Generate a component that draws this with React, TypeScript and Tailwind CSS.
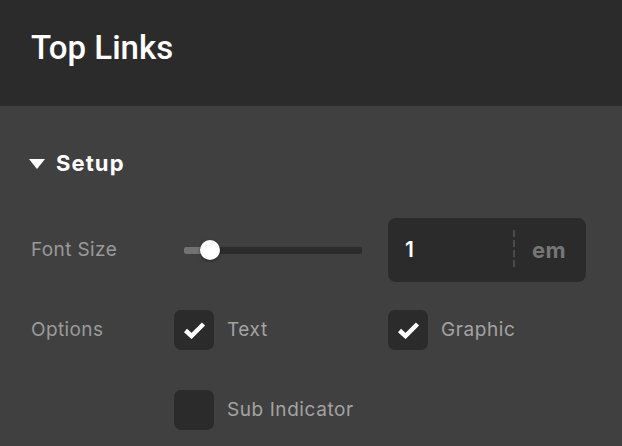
function CheckMark() {
  return (
    <svg width="23" height="18" viewBox="0 0 23 18" className="text-white">
      <path
        d="M2.5 9.5 L8.5 15 L20.5 3"
        fill="none"
        stroke="currentColor"
        strokeWidth="4.5"
        strokeLinejoin="miter"
      />
    </svg>
  );
}

function Checkbox({ checked, label }: { checked: boolean; label: string }) {
  return (
    <label className="flex items-center gap-[13px]">
      <span className="flex h-10 w-10 items-center justify-center rounded-[7px] bg-[#2b2b2b]">
        {checked && <CheckMark />}
      </span>
      <span className="text-[19px] tracking-[0.03em] text-[#a3a3a3]">{label}</span>
    </label>
  );
}

export default function App() {
  return (
    <div
      className="h-[446px] w-[622px] overflow-hidden bg-[#404040]"
      style={{ fontFamily: "Inter, 'Noto Sans', sans-serif" }}
    >
      <header className="flex h-[106px] items-center bg-[#2b2b2b] px-[31px] pb-[10px]">
        <h1
          className="text-[33px] font-medium text-white"
          style={{ fontFamily: "Roboto, sans-serif" }}
        >
          Top Links
        </h1>
      </header>

      <section className="px-[29px] pt-[41px]">
        <div className="flex items-center gap-[11px]">
          <svg width="16" height="10" viewBox="0 0 16 10" className="text-white">
            <path d="M0 0h16L8 10z" fill="currentColor" />
          </svg>
          <h2 className="text-[22px] font-bold tracking-[0.05em] text-white">Setup</h2>
        </div>

        <div className="mt-[38px] grid grid-cols-[145px_214px_198px] items-center">
          <span className="pl-[2px] text-[19px] tracking-[0.02em] text-[#9a9a9a]">Font Size</span>
          <div className="relative ml-[10px] h-[7px] w-[178px] rounded-[2px] bg-[#2b2b2b]">
            <div className="h-full w-[20px] rounded-l-[2px] bg-[#727272]" />
            <div className="absolute left-[16px] top-1/2 h-5 w-5 -translate-y-1/2 rounded-full bg-white shadow-[0_1px_3px_rgba(0,0,0,0.5)]" />
          </div>
          <div className="flex h-16 items-center rounded-[8px] bg-[#2b2b2b]">
            <span className="w-[125px] pl-[17px] text-[21px] font-semibold text-white">1</span>
            <svg width="2" height="40" viewBox="0 0 2 40">
              <line x1="1" y1="0" x2="1" y2="40" stroke="#555555" strokeWidth="1.5" strokeDasharray="7 3" />
            </svg>
            <span className="pl-[17px] text-[22px] font-bold tracking-[0.02em] text-[#767676]">em</span>
          </div>

          <span className="mt-[28px] pl-[2px] text-[19px] tracking-[0.02em] text-[#9a9a9a]">Options</span>
          <div className="mt-[28px]">
            <Checkbox checked label="Text" />
          </div>
          <div className="mt-[28px]">
            <Checkbox checked label="Graphic" />
          </div>

          <span />
          <div className="mt-[40px]">
            <Checkbox checked={false} label="Sub Indicator" />
          </div>
        </div>
      </section>
    </div>
  );
}
